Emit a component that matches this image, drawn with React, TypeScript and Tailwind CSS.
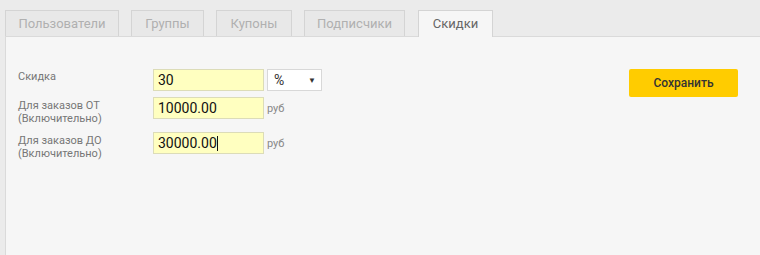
import React from "react";

const tabs = ["Пользователи", "Группы", "Купоны", "Подписчики", "Скидки"];
const tabW = [114, 73, 76, 101, 75];

function Field({ value, caret }: { value: string; caret?: boolean }) {
  return (
    <div className="w-[111px] h-[22px] bg-[#ffffc0] border border-[#dcdcb8] flex items-center pl-[4px] text-[14px] text-[#111] font-normal leading-none">
      <span>{value}</span>
      {caret && <span className="inline-block w-[1px] h-[15px] bg-[#111]" />}
    </div>
  );
}

export default function App() {
  return (
    <div
      className="w-[760px] h-[255px] bg-[#ebebeb] overflow-hidden flex flex-col"
      style={{ fontFamily: "Roboto, 'Noto Sans', sans-serif" }}
    >
      <div className="flex pt-[10px] pl-[5px] gap-[12px] relative z-10">
        {tabs.map((t, i) => {
          const active = i === tabs.length - 1;
          return (
            <div
              key={t}
              style={{ width: tabW[i] }}
              className={
                active
                  ? "h-[27px] -mb-[1px] bg-[#f6f6f6] border border-b-0 border-[#d4d4d4] flex items-center justify-center text-[13px] text-[#666] ml-[1px]"
                  : "h-[26px] bg-[#e8e8e8] border border-b-0 border-[#d4d4d4] flex items-center justify-center text-[13px] text-[#b0b0b0]"
              }
            >
              {t}
            </div>
          );
        })}
      </div>
      <div className="flex-1 ml-[5px] bg-[#f6f6f6] border-t border-l border-[#dadada] pt-[32px] pl-[12px] pr-[22px] flex">
        <div className="flex-1 flex flex-col text-[11px] text-[#777] leading-[13px]">
          <div className="flex h-[28px]">
            <div className="w-[135px] pt-[1px]">Скидка</div>
            <Field value="30" />
            <div className="ml-[3px] w-[55px] h-[22px] bg-white border border-[#d8d8d8] flex items-center justify-between pl-[6px] pr-[5px] text-[14px] text-[#333]">
              <span>%</span>
              <span className="text-[8px] text-[#333]">▼</span>
            </div>
          </div>
          <div className="flex h-[35px]">
            <div className="w-[135px] pt-[2px]">
              Для заказов ОТ
              <br />
              (Включительно)
            </div>
            <Field value="10000.00" />
            <div className="ml-[3px] pt-[5px] text-[#888]">руб</div>
          </div>
          <div className="flex">
            <div className="w-[135px] pt-[2px]">
              Для заказов ДО
              <br />
              (Включительно)
            </div>
            <Field value="30000.00" caret />
            <div className="ml-[3px] pt-[5px] text-[#888]">руб</div>
          </div>
        </div>
        <div>
          <button className="w-[109px] h-[28px] bg-[#ffcc00] rounded-[2px] text-[12px] font-medium text-[#333]">
            Сохранить
          </button>
        </div>
      </div>
    </div>
  );
}
